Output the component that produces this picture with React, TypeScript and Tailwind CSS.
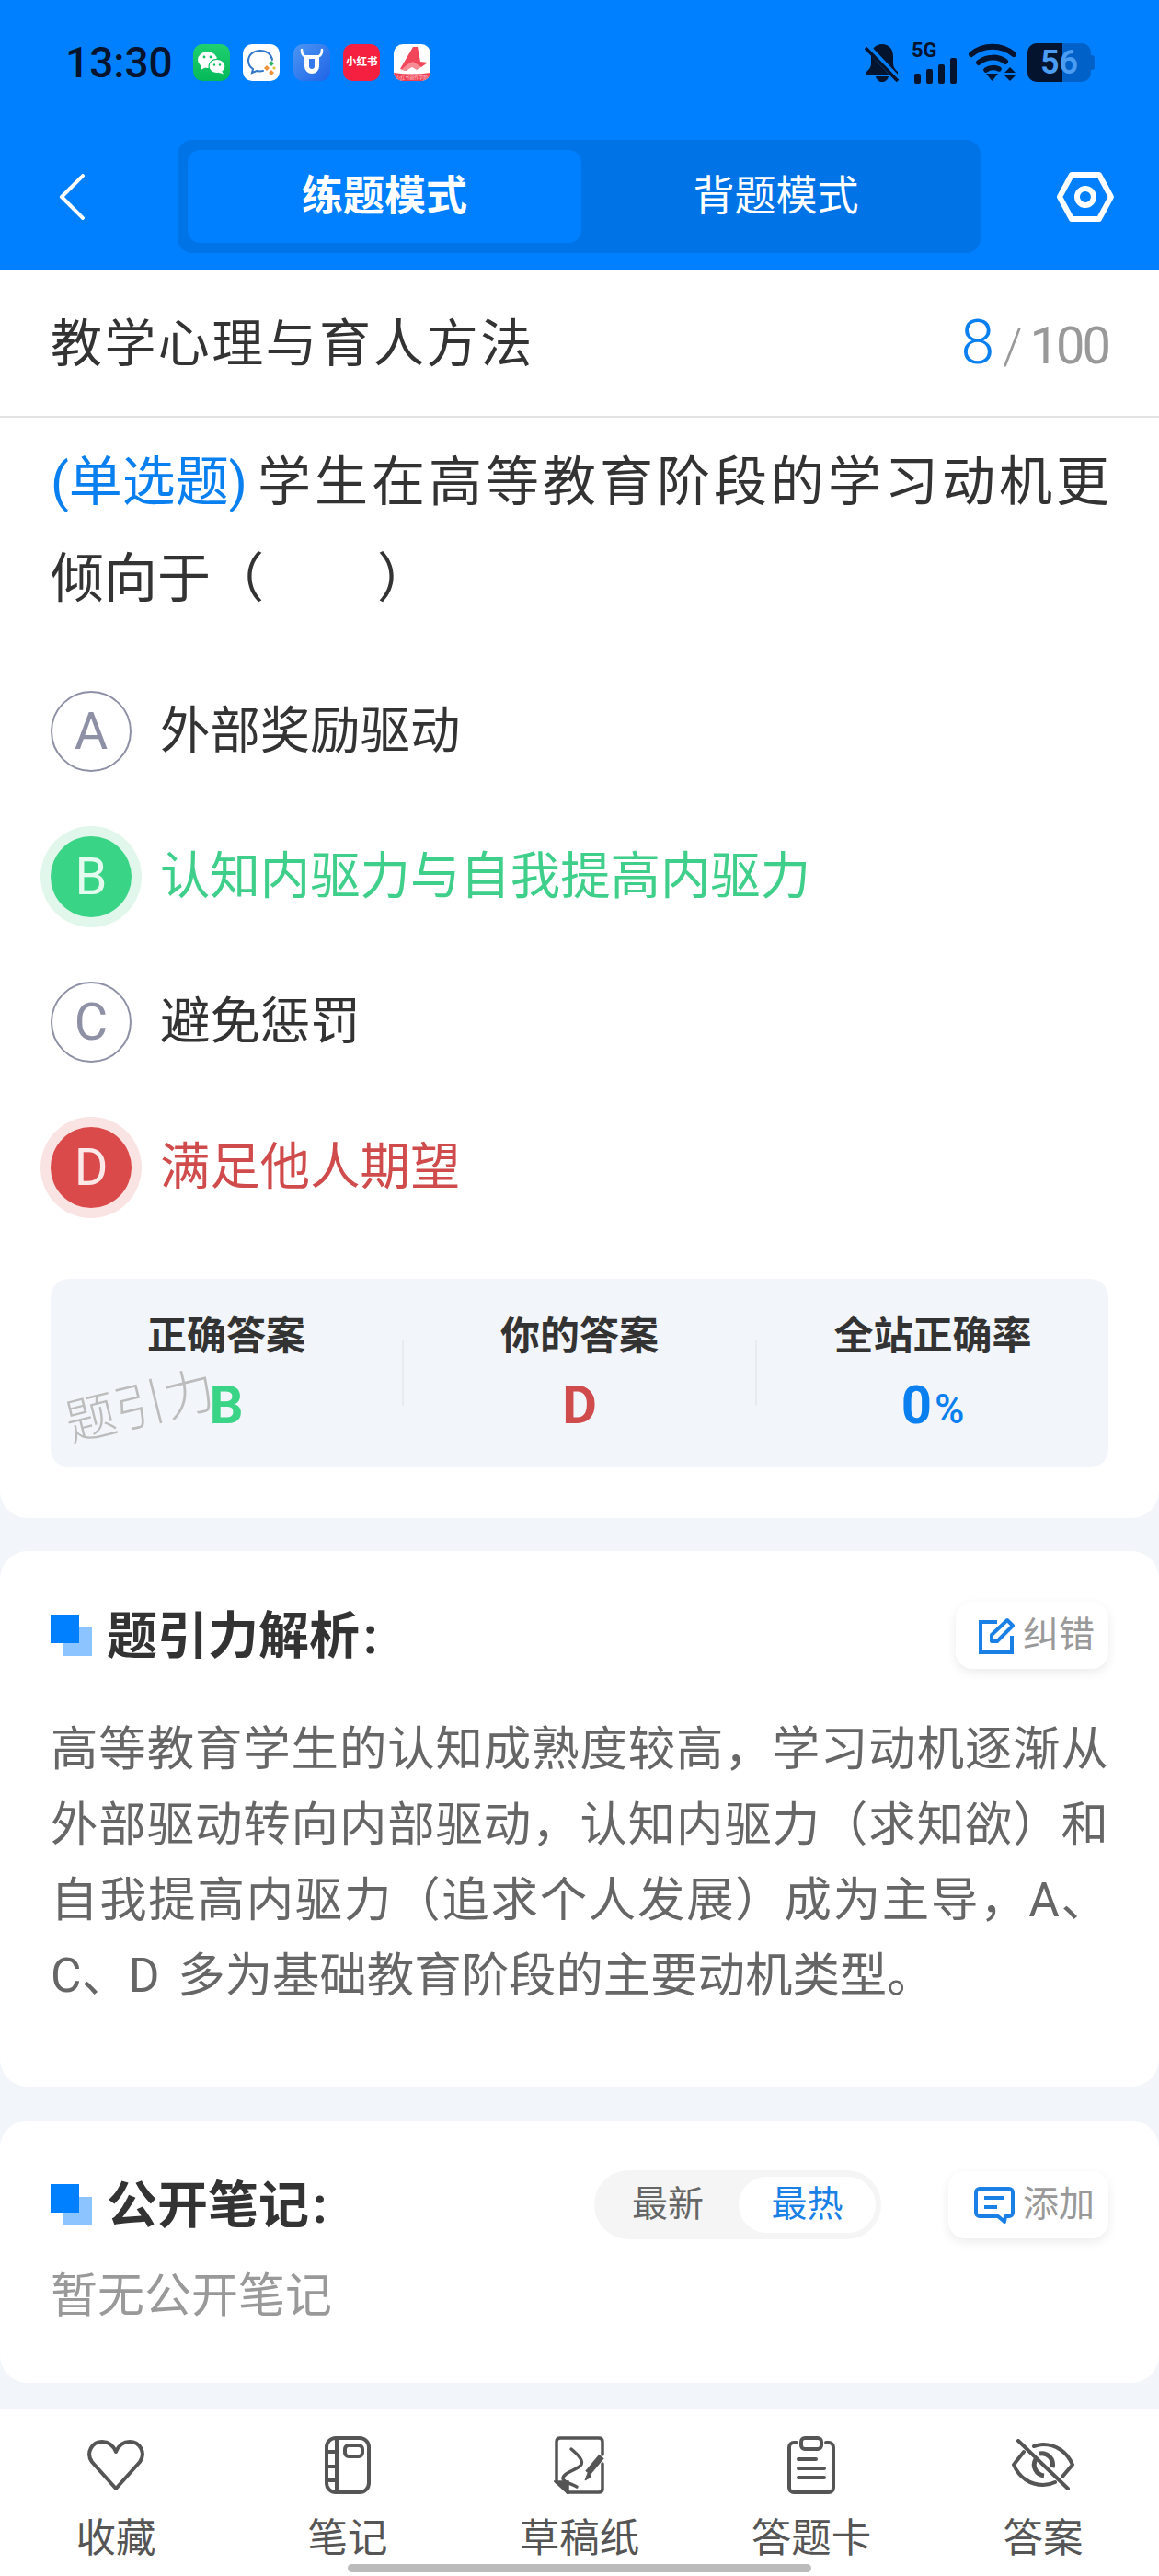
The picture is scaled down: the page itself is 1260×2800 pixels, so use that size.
const ink = "#04142e";

function WeChatIcon() {
  return (
    <svg width="40" height="40" viewBox="0 0 40 40">
      <defs>
        <linearGradient id="wx" x1="0" y1="0" x2="0" y2="1">
          <stop offset="0" stopColor="#1fd06f" />
          <stop offset="1" stopColor="#05b858" />
        </linearGradient>
      </defs>
      <rect width="40" height="40" rx="10" fill="url(#wx)" />
      <ellipse cx="15.5" cy="17" rx="10.5" ry="9" fill="#fff" />
      <path d="M9 23l-1 5 6-3z" fill="#fff" />
      <ellipse cx="26" cy="24" rx="9" ry="7.6" fill="#fff" stroke="#0cc162" strokeWidth="1.2" />
      <path d="M31 29l2 3.5-6-2z" fill="#fff" />
      <circle cx="12" cy="14" r="1.4" fill="#0cc162" />
      <circle cx="19" cy="14" r="1.4" fill="#0cc162" />
      <circle cx="23" cy="22.5" r="1.2" fill="#0cc162" />
      <circle cx="29" cy="22.5" r="1.2" fill="#0cc162" />
    </svg>
  );
}

function ChatIcon() {
  return (
    <svg width="40" height="40" viewBox="0 0 40 40">
      <rect width="40" height="40" rx="10" fill="#fff" />
      <path d="M19 7c-8 0-13 5-13 11 0 4 2 7 5 9l-1 4 5-2c2 .5 5 .5 7 0" fill="none" stroke="#3277c9" strokeWidth="2" strokeLinecap="round" />
      <path d="M19 7c7 0 12 4 13 10" fill="none" stroke="#3277c9" strokeWidth="2" strokeLinecap="round" />
      <path d="M28 21l3-3 3 3-3 3z" fill="#36b36b" />
      <path d="M23 26l3-3 3 3-3 3z" fill="#f0913a" />
      <path d="M28 31l3-3 3 3-3 3z" fill="#f0913a" />
      <path d="M32 26l2-2 2 2-2 2z" fill="#e8c53a" />
    </svg>
  );
}

function CowIcon() {
  return (
    <svg width="40" height="40" viewBox="0 0 40 40">
      <defs>
        <linearGradient id="cow" x1="0" y1="0" x2="1" y2="1">
          <stop offset="0" stopColor="#4b96f3" />
          <stop offset="1" stopColor="#1f63e6" />
        </linearGradient>
      </defs>
      <rect width="40" height="40" rx="10" fill="url(#cow)" />
      <path d="M9 6c0 4 1 6 3 7M31 6c0 4-1 6-3 7" fill="none" stroke="#fff" strokeWidth="2.6" strokeLinecap="round" />
      <path d="M12 12h16v12a8 8 0 0 1-16 0z" fill="#fff" />
      <path d="M17 16h6v8a3 3 0 0 1-6 0z" fill="#3478ee" />
    </svg>
  );
}

function AppIcons() {
  return (
    <div className="ml-[22px] flex gap-[14.5px]">
      <WeChatIcon />
      <ChatIcon />
      <CowIcon />
      <div className="flex size-[40px] items-center justify-center rounded-[10px] bg-[#f5203f] text-[11.5px] leading-none font-bold text-white">
        小红书
      </div>
      <div className="relative size-[40px] overflow-hidden rounded-[10px] bg-white">
        <svg width="40" height="40" viewBox="0 0 40 40">
          <path d="M21 3h5l3 16 8 1-7 5-9-5-7 9-7-2z" fill="#f2475a" />
          <path d="M15 22l6-3 9 6-5 3-5-3-7 4-5-1z" fill="#f78c97" />
          <path d="M0 31q20 3 40 0v9H0z" fill="#ee3e52" />
        </svg>
        <span className="absolute inset-x-0 bottom-[1px] text-center text-[5px] leading-[6px] whitespace-nowrap text-[#ffd9dd]">
          小红书创作学院
        </span>
      </div>
    </div>
  );
}

function StatusRight() {
  return (
    <div className="flex items-center">
      <svg width="38" height="42" viewBox="0 0 38 42">
        <path d="M19 1c-7 0-12 5-12 13v8c0 4-2 6-5 9v3h34v-3c-3-3-5-5-5-9v-8c0-8-5-13-12-13z" fill={ink} />
        <path d="M12 36h14c-1 4-4 6-7 6s-6-2-7-6z" fill={ink} />
        <path d="M2 3l34 36" stroke="#0080ff" strokeWidth="7" />
        <path d="M1 5l35 36" stroke={ink} strokeWidth="3.6" />
      </svg>
      <div className="ml-[13px] flex h-[42px] w-[49px] flex-col">
        <span className="h-[16px] text-[22px] leading-[16px] font-bold text-[#04142e]">5G</span>
        <div className="mt-auto flex items-end gap-[6px] pl-[3px]">
          <div className="h-[11px] w-[7px] rounded-[2px] bg-[#04142e]" />
          <div className="h-[16px] w-[7px] rounded-[2px] bg-[#04142e]" />
          <div className="h-[21px] w-[8px] rounded-[2px] bg-[#04142e]" />
          <div className="h-[28px] w-[7px] rounded-[2px] bg-[#04142e]" />
        </div>
      </div>
      <svg className="ml-[13px]" width="52" height="42" viewBox="0 0 52 42">
        <path d="M3 12c13-11 33-11 46 0" fill="none" stroke={ink} strokeWidth="6" strokeLinecap="round" />
        <path d="M11 21c9-7 21-7 29-1" fill="none" stroke={ink} strokeWidth="6" strokeLinecap="round" />
        <path d="M19 29c4-3 10-3 14-1" fill="none" stroke={ink} strokeWidth="5.5" strokeLinecap="round" />
        <path d="M19 33h13l-6.500 8z" fill={ink} />
        <path d="M39 32l6-6 6 6z" fill={ink} />
        <path d="M39 35l6 6 6-6z" fill={ink} />
      </svg>
      <div className="relative ml-[12px] flex h-[42px] w-[69px] overflow-hidden rounded-[10px] bg-[#0062c8]">
        <div className="h-full w-[38px] bg-[#04142e]" />
        <span className="absolute inset-0 text-center text-[36px] leading-[42px] font-semibold text-[#4a9df2]">56</span>
      </div>
      <div className="h-[16px] w-[4px] rounded-r-[3px] bg-[#0062c8]" />
    </div>
  );
}

function SectionMark() {
  return (
    <div className="relative size-[45px] shrink-0">
      <div className="absolute top-[14px] left-[14px] size-[31px] bg-[#8cc4ff]" />
      <div className="absolute top-0 left-0 size-[31px] bg-[#0080ff]" />
    </div>
  );
}

function SectionTitle({ text }: { text: string }) {
  return (
    <h2 className="ml-[16px] translate-y-[1px] text-[55px] leading-none font-bold text-[#333]">
      {text}
      <span className="ml-[4px]">:</span>
    </h2>
  );
}

function ActionButton({ icon, label, w }: { icon: React.ReactNode; label: string; w: string }) {
  return (
    <div className={`flex h-[73px] ${w} items-center justify-end gap-[9px] rounded-[18px] bg-white pr-[15px] shadow-[0_4px_12px_rgba(0,0,0,0.08)]`}>
      {icon}
      <span className="text-[39px] leading-none text-[#999]">{label}</span>
    </div>
  );
}

function Option({ letter, text, state }: { letter: string; text: string; state?: "right" | "wrong" }) {
  return (
    <div className="flex h-[158px] items-center">
      {state === "right" ? (
        <div className="flex size-[88px] items-center justify-center rounded-full bg-[#3ad487] text-[56px] text-[#e4fbef] shadow-[0_0_0_11px_#e1f7eb]">
          {letter}
        </div>
      ) : state === "wrong" ? (
        <div className="flex size-[88px] items-center justify-center rounded-full bg-[#db4a4a] text-[56px] text-[#fbe8e8] shadow-[0_0_0_11px_#fae3e3]">
          {letter}
        </div>
      ) : (
        <div className="flex size-[88px] items-center justify-center rounded-full border-2 border-[#8e90a6] text-[56px] text-[#8e90a6]">
          {letter}
        </div>
      )}
      <span
        className={
          state === "right"
            ? "ml-[31px] text-[54.400px] leading-none text-[#3fcf8a]"
            : state === "wrong"
              ? "ml-[31px] text-[54.400px] leading-none text-[#d04c4c]"
              : "ml-[31px] text-[54.400px] leading-none text-[#333]"
        }
      >
        {text}
      </span>
    </div>
  );
}

function Stat({ label, children }: { label: string; children: React.ReactNode }) {
  return (
    <div className="flex flex-1 flex-col items-center">
      <div className="h-[50px] translate-y-[1px] text-[43px] leading-[50px] font-bold text-[#333]">{label}</div>
      <div className="mt-[21px] flex h-[60px] items-baseline text-[58px] leading-[60px] font-bold">{children}</div>
    </div>
  );
}

function NavItem({ icon, label }: { icon: React.ReactNode; label: string }) {
  return (
    <div className="flex flex-col items-center">
      <div className="flex h-[66px] items-center">{icon}</div>
      <span className="mt-[23px] text-[43.500px] leading-[50px] text-[#555]">{label}</span>
    </div>
  );
}

export default function App() {
  return (
    <div className="relative h-[2800px] w-[1260px] overflow-hidden bg-[#f2f5f9] [font-family:Roboto,'Noto_Sans_CJK_SC',sans-serif]">
      <header className="h-[294px] bg-[#0080ff]">
        <div className="flex h-[44px] translate-y-[46px] items-center justify-between pr-[70px] pl-[71px]">
          <div className="flex items-center">
            <span className="text-[46px] leading-none font-medium text-[#04142e]">13:30</span>
            <AppIcons />
          </div>
          <StatusRight />
        </div>
        <div className="mt-[108px] flex h-[123px] items-center pr-[49px] pl-[64px]">
          <svg width="28" height="50" viewBox="0 0 28 50" fill="none">
            <path d="M26 2L3 25l23 23" stroke="#fff" strokeWidth="4" strokeLinecap="round" strokeLinejoin="round" />
          </svg>
          <div className="ml-[101px] flex h-[123px] w-[875px] rounded-[16px] bg-[#0073e6] p-[11px]">
            <div className="flex w-[428px] items-center justify-center rounded-[14px] bg-[#0080ff] text-[45px] font-bold text-white">
              练题模式
            </div>
            <div className="flex flex-1 items-center justify-center text-[45px] text-white">背题模式</div>
          </div>
          <svg className="ml-[83px]" width="62" height="56" viewBox="0 0 62 56" fill="none">
            <path d="M16 4h30l13 24-13 24H16L3 28z" stroke="#fff" strokeWidth="6" strokeLinejoin="round" />
            <circle cx="31" cy="28" r="9" stroke="#fff" strokeWidth="6" />
          </svg>
        </div>
      </header>

      <section className="rounded-b-[30px] bg-white pb-[55px]">
        <div className="flex h-[160px] items-center justify-between border-b-2 border-[#e3e3e3] px-[55px]">
          <h1 className="translate-y-[1px] text-[56px] leading-none tracking-[2.400px] text-[#333]">教学心理与育人方法</h1>
          <div className="flex items-baseline">
            <span className="text-[66px] leading-none font-light text-[#0a80f0]">8</span>
            <span className="mr-[8px] ml-[9px] text-[54px] leading-none font-light text-[#999]">/</span>
            <span className="text-[56px] leading-none tracking-[-3px] text-[#999]">100</span>
          </div>
        </div>

        <div className="px-[55px] pt-[18px] text-[58px] leading-[105px] whitespace-nowrap text-[#333]">
          <span className="mr-[11px] inline-block text-[#0a80f0]">(单选题)</span>
          <span className="tracking-[4px]">学生在高等教育阶段的学习动机更</span>
          <br />
          倾向于（　　<span className="ml-[7px]">）</span>
        </div>

        <div className="mt-[34px] px-[55px]">
          <Option letter="A" text="外部奖励驱动" />
          <Option letter="B" text="认知内驱力与自我提高内驱力" state="right" />
          <Option letter="C" text="避免惩罚" />
          <Option letter="D" text="满足他人期望" state="wrong" />
        </div>

        <div className="relative mx-[55px] mt-[42px] flex h-[205px] items-start rounded-[20px] bg-[#f2f5f9] pt-[36px]">
          <Stat label="正确答案">
            <span className="text-[#3ad487]">B</span>
          </Stat>
          <div className="mt-[31px] h-[71px] w-[2px] bg-[#e8ebef]" />
          <Stat label="你的答案">
            <span className="text-[#d04c4c]">D</span>
          </Stat>
          <div className="mt-[31px] h-[71px] w-[2px] bg-[#e8ebef]" />
          <Stat label="全站正确率">
            <span className="text-[#0a80f0]">0</span>
            <span className="ml-[3px] text-[44px] font-medium text-[#0a80f0]">%</span>
          </Stat>
          <span className="absolute top-[112px] left-[15px] -rotate-[14deg] text-[55px] leading-none font-light text-[#bcbcbc]">
            题引力
          </span>
        </div>
      </section>

      <section className="mt-[36px] h-[582px] rounded-[30px] bg-white px-[55px] pt-[55px]">
        <div className="flex h-[73px] items-center justify-between">
          <div className="flex items-center">
            <SectionMark />
            <SectionTitle text="题引力解析" />
          </div>
          <ActionButton
            w="w-[166px]"
            label="纠错"
            icon={
              <svg width="40" height="40" viewBox="0 0 40 40" fill="none">
                <path d="M21 5H3v33h34V20" stroke="#1a80e5" strokeWidth="4" />
                <path d="M15 19L32 3l6 6-17 17h-6z" stroke="#1a80e5" strokeWidth="4" strokeLinejoin="round" />
              </svg>
            }
          />
        </div>
        <p className="mt-[47px] text-justify text-[51.400px] leading-[82px] text-[#666] [word-spacing:7px]">
          高等教育学生的认知成熟度较高，学习动机逐渐从外部驱动转向内部驱动，认知内驱力（求知欲）和自我提高内驱力（追求个人发展）成为主导，A、C、D 多为基础教育阶段的主要动机类型。
        </p>
      </section>

      <section className="mt-[37px] h-[285px] rounded-[30px] bg-white px-[55px] pt-[54px]">
        <div className="flex h-[75px] items-center">
          <SectionMark />
          <SectionTitle text="公开笔记" />
          <div className="mr-[73px] ml-auto flex h-[75px] w-[312px] items-center justify-end rounded-full bg-[#f5f5f5] pr-[6px] text-[39px]">
            <span className="mr-[38px] text-[#666]">最新</span>
            <span className="flex h-[61px] w-[149px] items-center justify-center rounded-full bg-white text-[#1a80e5]">
              最热
            </span>
          </div>
          <ActionButton
            w="w-[174px]"
            label="添加"
            icon={
              <svg width="44" height="40" viewBox="0 0 44 40" fill="none">
                <path d="M6 2h32a4 4 0 0 1 4 4v22a4 4 0 0 1-4 4h-4l-1 6-7-6H6a4 4 0 0 1-4-4V6a4 4 0 0 1 4-4z" stroke="#1a80e5" strokeWidth="4" strokeLinejoin="round" />
                <path d="M11 12h22M11 22h14" stroke="#1a80e5" strokeWidth="4" />
              </svg>
            }
          />
        </div>
        <p className="mt-[32px] text-[51px] leading-[60px] text-[#999]">暂无公开笔记</p>
      </section>

      <nav className="mt-[28px] grid h-[182px] grid-cols-5 bg-white pt-[28px]">
        <NavItem
          label="收藏"
          icon={
            <svg width="64" height="56" viewBox="0 0 64 56" fill="none">
              <path d="M32 54L6 25C-1 15 6 3 17 3c7 0 12 4 15 11 3-7 8-11 15-11 11 0 18 12 11 22z" stroke="#555" strokeWidth="4" strokeLinejoin="round" />
            </svg>
          }
        />
        <NavItem
          label="笔记"
          icon={
            <svg width="50" height="63" viewBox="0 0 50 63" fill="none" stroke="#555" strokeWidth="4">
              <rect x="2" y="2" width="46" height="59" rx="10" />
              <path d="M13 2v59M2 17h11M2 33h11M2 48h11" />
              <rect x="22" y="10" width="19" height="12" rx="4" />
            </svg>
          }
        />
        <NavItem
          label="草稿纸"
          icon={
            <svg width="56" height="63" viewBox="0 0 56 63" fill="none" stroke="#555" strokeWidth="3.500">
              <path d="M3 50V6q0-4 4-4h42q4 0 4 4v14M53 30v27q0 4-4 4H15" strokeLinecap="round" />
              <path d="M3 50h12v11z" fill="#555" />
              <path d="M19 14c6 5 15 13 10 18s-19 8-19 14c0 4 10 6 15 9" strokeLinecap="round" />
              <path d="M52 22L37 40" strokeWidth="7" />
              <path d="M37 40l-3 8 7-4z" fill="#555" strokeWidth="1" />
            </svg>
          }
        />
        <NavItem
          label="答题卡"
          icon={
            <svg width="54" height="63" viewBox="0 0 54 63" fill="none" stroke="#555" strokeWidth="4">
              <path d="M11 7H8a5 5 0 0 0-5 5v44a5 5 0 0 0 5 5h38a5 5 0 0 0 5-5V12a5 5 0 0 0-5-5h-3" strokeLinecap="round" />
              <rect x="16" y="2" width="22" height="12" rx="4" />
              <path d="M13 25h19M13 35h28M13 45h28" strokeLinecap="round" />
            </svg>
          }
        />
        <NavItem
          label="答案"
          icon={
            <svg width="68" height="56" viewBox="0 0 68 56" fill="none" stroke="#555" strokeWidth="4">
              <path d="M13 14L2 28c6 14 18 22 32 22 5 0 9-1 13-3M24 8c3-1 7-2 10-2 14 0 26 8 32 22l-11 13" strokeLinecap="round" strokeLinejoin="round" />
              <path d="M26 22a12 12 0 0 0 9 18M30 16a12 12 0 0 1 14 15" strokeWidth="5" />
              <path d="M7 2l54 52" strokeLinecap="round" />
            </svg>
          }
        />
      </nav>

      <div className="absolute bottom-[4px] left-[378px] h-[9px] w-[504px] rounded-full bg-[#bbb]" />
    </div>
  );
}
